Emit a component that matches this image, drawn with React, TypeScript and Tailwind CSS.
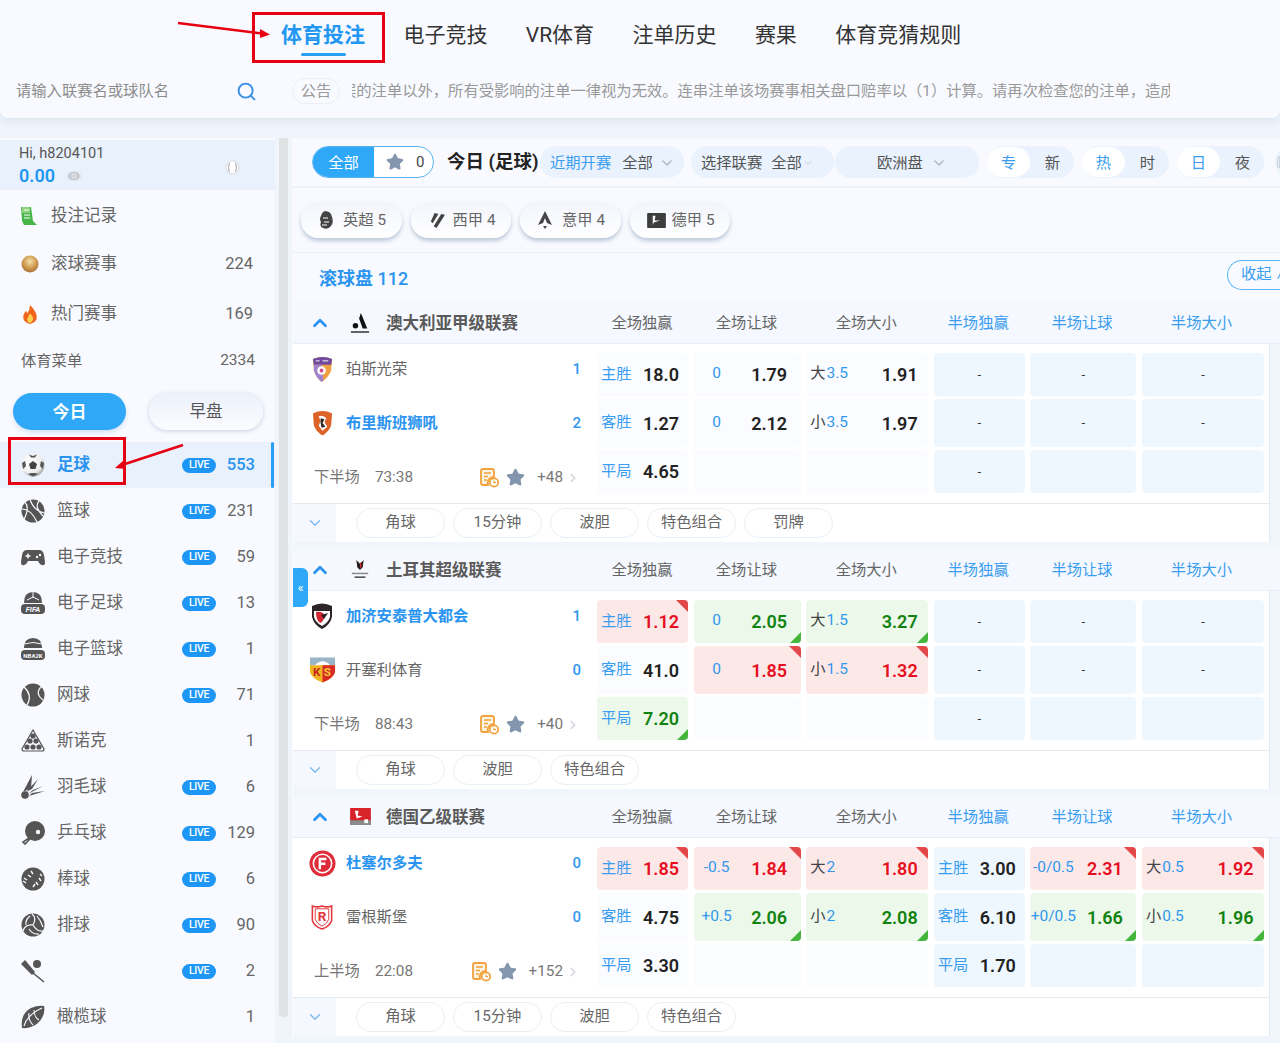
import { ChevronDown, ChevronRight, ChevronUp, Eye, Search, Star } from "lucide-react";
import type { ReactNode } from "react";

type Tone = "red" | "green";

interface Cell {
  label?: string;
  dark?: boolean;
  line?: string;
  value?: string;
  tone?: Tone;
  dash?: boolean;
}

interface Match {
  league: string;
  leagueLogo: ReactNode;
  home: { name: string; score: string; logo: ReactNode; winner?: boolean };
  away: { name: string; score: string; logo: ReactNode; winner?: boolean };
  period: string;
  clock: string;
  more: string;
  cells: Cell[];
  markets: string[];
}

const dash: Cell = { dash: true };
const empty: Cell = {};

function PerthLogo() {
  return (
    <svg viewBox="0 0 24 28" className="h-[27px] w-[23px]">
      <path d="M2 3 Q12 -1 22 3 L21 15 Q18 23 11 27 Q5 22 3 15Z" fill="#f0a040" />
      <path d="M2 3 Q12 -1 22 3 L21 9 L3 9Z" fill="#6f4a9e" />
      <path d="M3 9 L11 9 L13 25 L11 27 Q5 22 3 15Z" fill="#a184cf" />
      <circle cx="11" cy="15" r="4.5" fill="#fff" />
      <circle cx="11" cy="15" r="2" fill="#d24a8a" />
      <path d="M5 5 H9 M12 5 H18" stroke="#fff" strokeWidth="1" />
    </svg>
  );
}

function BrisbaneLogo() {
  return (
    <svg viewBox="0 0 22 28" className="h-[28px] w-[21px]">
      <path d="M1 4 Q11 -1 21 4 L20 17 Q17 24 11 27 Q5 24 2 17Z" fill="#dc6228" />
      <path d="M7 7 Q12 5 15 9 L13 13 L16 18 L11 22 L7 17 L9 12Z" fill="#fff" />
      <path d="M9 9 L13 10 L11 14 L14 18 L10 19 L9 14Z" fill="#2b2320" />
    </svg>
  );
}

function GaziantepLogo() {
  return (
    <svg viewBox="0 0 24 28" className="h-[28px] w-[24px]">
      <path d="M2 4 Q12 -1 22 4 L22 15 Q20 23 12 27 Q4 23 2 15Z" fill="#2c2426" />
      <path d="M4 9 H20 L20 15 Q18 21 12 24 Q6 21 4 15Z" fill="#fff" />
      <path d="M6 10 Q13 9 15 14 Q13 20 10 21 Q6 18 6 10Z" fill="#d22630" />
      <path d="M11 13 L18 11 L14 17Z" fill="#2c2426" />
    </svg>
  );
}

function KayseriLogo() {
  return (
    <svg viewBox="0 0 28 28" className="h-[28px] w-[27px]">
      <path d="M1 1 H27 V9 H1Z" fill="#9ab4c8" />
      <path d="M6 9 Q14 1 22 9Z" fill="#fff" />
      <path d="M1 9 H27 V16 Q25 23 14 27 Q3 23 1 16Z" fill="#f2b322" />
      <path d="M14 9 H27 V16 Q25 23 14 27Z" fill="#d92b25" />
      <text x="8" y="20" textAnchor="middle" fontSize="12" fontWeight="700" fill="#c5281f">
        K
      </text>
      <text x="19" y="20" textAnchor="middle" fontSize="12" fontWeight="700" fill="#f7c93a">
        S
      </text>
    </svg>
  );
}

function FortunaLogo() {
  return (
    <svg viewBox="0 0 28 28" className="h-[27px] w-[27px]">
      <circle cx="14" cy="14" r="13.5" fill="#df2c3a" />
      <circle cx="14" cy="14" r="9.5" fill="none" stroke="#fff" strokeWidth="1.6" />
      <path d="M10 8 H18 V10.5 H12.5 V13 H17 V15.5 H12.5 V20 H10Z" fill="#fff" />
    </svg>
  );
}

function RegensburgLogo() {
  return (
    <svg viewBox="0 0 24 28" className="h-[27px] w-[24px]">
      <path d="M2 2 Q7 4 12 2 Q17 4 22 2 V17 Q20 23 12 26 Q4 23 2 17Z" fill="#fff" stroke="#e2363c" strokeWidth="1.6" />
      <path d="M5 5 H19 V16 Q17 21 12 23 Q7 21 5 16Z" fill="none" stroke="#e2363c" strokeWidth="1" />
      <text x="12" y="18" textAnchor="middle" fontSize="14" fontWeight="700" fill="#e2363c">
        R
      </text>
    </svg>
  );
}

function ALeagueLogo() {
  return (
    <svg viewBox="0 0 22 24" className="h-[24px] w-[20px]">
      <path d="M12 1 L19 18 H14 L10 7Z" fill="#111" />
      <circle cx="6" cy="15" r="3" fill="#111" />
      <rect x="1" y="21" width="20" height="1.8" fill="#444" />
    </svg>
  );
}

function TurkeyLogo() {
  return (
    <svg viewBox="0 0 22 24" className="h-[24px] w-[20px]">
      <path d="M7 1 L11 5 L15 1 L14 9 L11 12 L8 9Z" fill="#2a1c1c" />
      <path d="M11 3 L13 7 L11 11Z" fill="#d22630" />
      <rect x="2" y="15" width="18" height="1.6" fill="#888" />
      <rect x="5" y="19" width="12" height="1.8" fill="#555" />
    </svg>
  );
}

function Liga2Logo() {
  return (
    <svg viewBox="0 0 22 18" className="h-[17px] w-[21px]">
      <rect width="22" height="18" fill="#d8232a" />
      <path d="M0 13 H22 V18 H0Z" fill="#8b8b8b" />
      <path d="M5 3 H9 L8 8 L13 9 L7 11Z" fill="#fff" />
      <rect x="15" y="12" width="4" height="4" fill="#fff" />
    </svg>
  );
}

const matches: Match[] = [
  {
    league: "澳大利亚甲级联赛",
    leagueLogo: <ALeagueLogo />,
    home: { name: "珀斯光荣", score: "1", logo: <PerthLogo /> },
    away: { name: "布里斯班狮吼", score: "2", logo: <BrisbaneLogo />, winner: true },
    period: "下半场",
    clock: "73:38",
    more: "+48",
    cells: [
      { label: "主胜", value: "18.0" },
      { label: "客胜", value: "1.27" },
      { label: "平局", value: "4.65" },
      { line: "0", value: "1.79" },
      { line: "0", value: "2.12" },
      empty,
      { label: "大", dark: true, line: "3.5", value: "1.91" },
      { label: "小", dark: true, line: "3.5", value: "1.97" },
      empty,
      dash,
      dash,
      dash,
      dash,
      dash,
      empty,
      dash,
      dash,
      empty,
    ],
    markets: ["角球", "15分钟", "波胆", "特色组合", "罚牌"],
  },
  {
    league: "土耳其超级联赛",
    leagueLogo: <TurkeyLogo />,
    home: { name: "加济安泰普大都会", score: "1", logo: <GaziantepLogo />, winner: true },
    away: { name: "开塞利体育", score: "0", logo: <KayseriLogo /> },
    period: "下半场",
    clock: "88:43",
    more: "+40",
    cells: [
      { label: "主胜", value: "1.12", tone: "red" },
      { label: "客胜", value: "41.0" },
      { label: "平局", value: "7.20", tone: "green" },
      { line: "0", value: "2.05", tone: "green" },
      { line: "0", value: "1.85", tone: "red" },
      empty,
      { label: "大", dark: true, line: "1.5", value: "3.27", tone: "green" },
      { label: "小", dark: true, line: "1.5", value: "1.32", tone: "red" },
      empty,
      dash,
      dash,
      dash,
      dash,
      dash,
      empty,
      dash,
      dash,
      empty,
    ],
    markets: ["角球", "波胆", "特色组合"],
  },
  {
    league: "德国乙级联赛",
    leagueLogo: <Liga2Logo />,
    home: { name: "杜塞尔多夫", score: "0", logo: <FortunaLogo />, winner: true },
    away: { name: "雷根斯堡", score: "0", logo: <RegensburgLogo /> },
    period: "上半场",
    clock: "22:08",
    more: "+152",
    cells: [
      { label: "主胜", value: "1.85", tone: "red" },
      { label: "客胜", value: "4.75" },
      { label: "平局", value: "3.30" },
      { line: "-0.5", value: "1.84", tone: "red" },
      { line: "+0.5", value: "2.06", tone: "green" },
      empty,
      { label: "大", dark: true, line: "2", value: "1.80", tone: "red" },
      { label: "小", dark: true, line: "2", value: "2.08", tone: "green" },
      empty,
      { label: "主胜", value: "3.00" },
      { label: "客胜", value: "6.10" },
      { label: "平局", value: "1.70" },
      { line: "-0/0.5", value: "2.31", tone: "red" },
      { line: "+0/0.5", value: "1.66", tone: "green" },
      empty,
      { label: "大", dark: true, line: "0.5", value: "1.92", tone: "red" },
      { label: "小", dark: true, line: "0.5", value: "1.96", tone: "green" },
      empty,
    ],
    markets: ["角球", "15分钟", "波胆", "特色组合"],
  },
];

const columnNames = ["全场独赢", "全场让球", "全场大小", "半场独赢", "半场让球", "半场大小"];

function OddsCell({ cell, half, column }: { cell: Cell; half: boolean; column: number }) {
  const bg =
    cell.tone === "red"
      ? "bg-[#fde8e8]"
      : cell.tone === "green"
        ? "bg-[#ecf8ea]"
        : half
          ? "bg-[#eef7fe]"
          : "bg-[#fafcff]";
  const valueColor =
    cell.tone === "red" ? "text-[#e60f1e]" : cell.tone === "green" ? "text-[#12820f]" : "text-[#222]";
  const isHandicap = column === 1 || column === 4;

  return (
    <div className={`relative flex items-center justify-between overflow-hidden rounded-[4px] ${bg}`}>
      {cell.dash && <span className="w-full text-center text-[13px] text-[#333]">-</span>}
      {cell.value && (
        <>
          {isHandicap ? (
            <span className="-mt-[1px] w-[46px] text-center text-[15.5px] text-[#3197ef]">{cell.line}</span>
          ) : (
            <span className="-mt-[1px] pl-[4px] text-[15.3px]">
              <span className={cell.dark ? "text-[#444]" : "text-[#3b9df0]"}>{cell.label}</span>
              {cell.line && <span className="ml-[1px] text-[15.5px] text-[#3197ef]">{cell.line}</span>}
            </span>
          )}
          <span
            className={`text-[18px] font-semibold ${valueColor} ${
              isHandicap ? "pr-[13.5px]" : column === 0 || column === 3 ? "pr-[9px]" : "pr-[10.5px]"
            }`}
          >
            {cell.value}
          </span>
        </>
      )}
      {cell.tone === "red" && (
        <span className="absolute right-0 top-0 h-0 w-0 border-l-[12px] border-t-[12px] border-l-transparent border-t-[#e2474a]" />
      )}
      {cell.tone === "green" && (
        <span className="absolute bottom-0 right-0 h-0 w-0 border-b-[11px] border-l-[11px] border-b-[#46b53e] border-l-transparent" />
      )}
    </div>
  );
}

function ScheduleIcon() {
  return (
    <svg viewBox="0 0 20 20" className="h-[20px] w-[20px]">
      <path d="M2 3 Q2 1 4 1 H13 Q15 1 15 3 V9 A6 6 0 0 0 9 17 H4 Q2 17 2 15Z" fill="#fdf3e3" stroke="#f2a23c" strokeWidth="1.8" />
      <path d="M5 5 H12 M5 8.5 H9 M5 12 H8" stroke="#f2a23c" strokeWidth="1.6" />
      <circle cx="15" cy="14.5" r="4.2" fill="#fff" stroke="#f2a23c" strokeWidth="1.8" />
      <path d="M15 12.5 V14.7 H17" fill="none" stroke="#f2a23c" strokeWidth="1.2" />
    </svg>
  );
}

function TeamRow({ team, className }: { team: Match["home"]; className: string }) {
  return (
    <div className={`flex items-center pr-[16px] ${className}`}>
      <div className="flex w-[53px] justify-center pl-[5px]">{team.logo}</div>
      <span className={`mt-[1px] flex-1 text-[15.3px] ${team.winner ? "font-bold text-[#2a94f0]" : "text-[#666]"}`}>
        {team.name}
      </span>
      <span className="text-[15px] font-medium text-[#3197ef]">{team.score}</span>
    </div>
  );
}

function MatchBlock({ match }: { match: Match }) {
  return (
    <div className="pb-[7px]">
      <div className="flex h-[42px] items-center border-b border-[#e8eef6] bg-[#f5f9ff]">
        <ChevronUp className="ml-[16px] h-[22px] w-[22px] text-[#2a94f0]" strokeWidth={3} />
        <div className="ml-[15px] flex w-[40px] justify-start pl-[4px]">{match.leagueLogo}</div>
        <span className="mt-[3px] w-[210.5px] text-[16.5px] font-bold text-[#5a5a5a]">{match.league}</span>
        <div className="mt-[2px] grid grid-cols-[91px_107px_122px_91px_106px_122px] gap-x-[5.4px]">
          {columnNames.map((name, i) => (
            <span key={name} className={`text-center text-[15.3px] ${i > 2 ? "text-[#3b9df0]" : "text-[#666]"}`}>
              {name}
            </span>
          ))}
        </div>
      </div>
      <div className="flex h-[160px] w-[977px] border-b border-r border-[#e4e9f0] bg-white">
        <div className="w-[304px]">
          <TeamRow team={match.home} className="h-[50px]" />
          <TeamRow team={match.away} className="h-[58px]" />
          <div className="flex h-[50px] items-center pl-[21px] pr-[17px] text-[15.3px] text-[#777]">
            <span className="mr-[15px]">{match.period}</span>
            <span>{match.clock}</span>
            <span className="ml-auto mt-[1px] flex items-center">
              <ScheduleIcon />
              <Star className="ml-[7px] mr-[12px] h-[19px] w-[19px] fill-[#8496ad] text-[#8496ad]" />
              <span>{match.more}</span>
              <ChevronRight className="ml-[3px] h-[16px] w-[14px] text-[#d4d9df]" strokeWidth={3} />
            </span>
          </div>
        </div>
        <div className="mt-[9px] grid h-[140px] grid-flow-col grid-cols-[91px_107px_122px_91px_106px_122px] grid-rows-[43px_48px_43px] gap-x-[5.6px] gap-y-[3px]">
          {match.cells.map((cell, i) => (
            <OddsCell key={i} cell={cell} half={i >= 9} column={Math.floor(i / 3)} />
          ))}
        </div>
      </div>
      <div className="flex h-[38px] w-[977px] items-center border-r border-[#e4e9f0] bg-white">
        <div className="flex h-full w-[43px] items-center justify-center bg-[#f5f9ff]">
          <ChevronDown className="h-[18px] w-[18px] text-[#7ab8f0]" strokeWidth={1.8} />
        </div>
        <div className="-mt-[1px] ml-[20px] flex gap-x-[8px]">
          {match.markets.map((m) => (
            <span
              key={m}
              className="flex h-[30px] w-[89px] items-center justify-center rounded-full border border-[#eaeff5] text-[15.3px] text-[#666]"
            >
              {m}
            </span>
          ))}
        </div>
      </div>
    </div>
  );
}

function Sport({ children }: { children: ReactNode }) {
  return (
    <svg viewBox="0 0 24 24" className="h-[24px] w-[24px]" fill="#555">
      {children}
    </svg>
  );
}

const sports: { name: string; live: boolean; count: string; icon: ReactNode }[] = [
  {
    name: "篮球",
    live: true,
    count: "231",
    icon: (
      <Sport>
        <circle cx="12" cy="12" r="11.5" />
        <path
          d="M9 0.5 Q13 12 23.5 14 M0.5 10 Q10 10 16 23 M4 3.5 Q9 8 3 20.5 M18 2 Q13 8 22 17"
          fill="none"
          stroke="#f8faff"
          strokeWidth="1.2"
        />
      </Sport>
    ),
  },
  {
    name: "电子竞技",
    live: true,
    count: "59",
    icon: (
      <Sport>
        <path d="M6 5 H18 Q22 5 23 10 L24 17 Q24 21 21 20 Q19 20 17 16 H7 Q5 20 3 20 Q0 21 0 17 L1 10 Q2 5 6 5Z" />
        <path d="M4.5 11 H9.5 M7 8.5 V13.5" stroke="#f8faff" strokeWidth="1.5" />
        <circle cx="16" cy="12" r="1.2" fill="#f8faff" />
        <circle cx="19" cy="10" r="1.2" fill="#f8faff" />
      </Sport>
    ),
  },
  {
    name: "电子足球",
    live: true,
    count: "13",
    icon: (
      <Sport>
        <path d="M3 12 Q3 1 12 1 Q21 1 21 12Z" />
        <path d="M12 1 V7 M6 9 L12 6 L18 9" fill="none" stroke="#f8faff" strokeWidth="1" />
        <rect x="0" y="13" width="24" height="10" rx="4" />
        <text x="12" y="21" textAnchor="middle" fontSize="7.5" fontWeight="700" fontStyle="italic" fill="#f8faff">
          FIFA
        </text>
      </Sport>
    ),
  },
  {
    name: "电子篮球",
    live: true,
    count: "1",
    icon: (
      <Sport>
        <path d="M3 11 Q3 1 12 1 Q21 1 21 11Z" />
        <path d="M3 7 Q12 4 21 7" fill="none" stroke="#f8faff" strokeWidth="1" />
        <rect x="0" y="13" width="24" height="10" rx="4" />
        <text x="12" y="20.5" textAnchor="middle" fontSize="6" fontWeight="700" fill="#f8faff">
          NBA2K
        </text>
      </Sport>
    ),
  },
  {
    name: "网球",
    live: true,
    count: "71",
    icon: (
      <Sport>
        <circle cx="12" cy="12" r="11.5" />
        <path d="M3 4 Q12 12 6 22 M21 3 Q13 10 22 17" fill="none" stroke="#f8faff" strokeWidth="1.2" />
      </Sport>
    ),
  },
  {
    name: "斯诺克",
    live: false,
    count: "1",
    icon: (
      <Sport>
        <path d="M12 1 L23 20 Q23 22 21 22 H3 Q1 22 1 20Z" fill="none" stroke="#555" strokeWidth="1.2" />
        <circle cx="12" cy="7" r="2.6" />
        <circle cx="9" cy="12" r="2.6" />
        <circle cx="15" cy="12" r="2.6" />
        <circle cx="6" cy="18" r="2.6" />
        <circle cx="12" cy="18" r="2.6" />
        <circle cx="18" cy="18" r="2.6" />
      </Sport>
    ),
  },
  {
    name: "羽毛球",
    live: true,
    count: "6",
    icon: (
      <Sport>
        <circle cx="4" cy="20" r="3.8" />
        <path d="M2 17 L11 0 L10 13Z M5 17 L17 4 L11 14Z M7 19 L22 11 L12 15Z M8 21 L24 16 L11 18Z" />
      </Sport>
    ),
  },
  {
    name: "乒乓球",
    live: true,
    count: "129",
    icon: (
      <Sport>
        <circle cx="14" cy="10" r="10" />
        <circle cx="17" cy="11" r="2.2" fill="#f8faff" />
        <path d="M8 17 L2 21 L4 23 L9 18" fill="none" stroke="#555" strokeWidth="1.6" />
      </Sport>
    ),
  },
  {
    name: "棒球",
    live: true,
    count: "6",
    icon: (
      <Sport>
        <circle cx="12" cy="12" r="11.5" />
        <path
          d="M3 11 L6 13 M7 8 L10 10 M10 4 L12 7 M12 20 L14 17 M15 15 L17 18 M18 11 L20 14 M2 14 L5 16 M19 7 L21 9"
          fill="none"
          stroke="#f8faff"
          strokeWidth="1.4"
        />
      </Sport>
    ),
  },
  {
    name: "排球",
    live: true,
    count: "90",
    icon: (
      <Sport>
        <circle cx="12" cy="12" r="11.5" />
        <path
          d="M12 12 Q16 5 11 1 M12 12 Q4 11 2 18 M12 12 Q16 19 22 18 M9 3 Q4 7 5 12 M16 3 Q20 8 22 14 M8 16 Q12 22 18 21"
          fill="none"
          stroke="#f8faff"
          strokeWidth="1.2"
        />
      </Sport>
    ),
  },
  {
    name: "",
    live: true,
    count: "2",
    icon: (
      <Sport>
        <circle cx="16" cy="5" r="4" />
        <path d="M0 5 L4 1 L14 13 L11 16Z" />
        <path d="M12 14 L23 23" stroke="#555" strokeWidth="1.6" />
      </Sport>
    ),
  },
  {
    name: "橄榄球",
    live: false,
    count: "1",
    icon: (
      <Sport>
        <path d="M1 23 Q-1 9 10 3 Q17 0 23 1 Q25 10 17 18 Q10 24 1 23Z" />
        <path d="M3 21 Q6 10 21 3 M8 8 Q7 15 12 20 M13 5 Q13 12 18 15" fill="none" stroke="#f8faff" strokeWidth="1.1" />
      </Sport>
    ),
  },
];

function LiveBadge() {
  return (
    <span className="flex h-[15px] w-[34px] items-center justify-center rounded-full bg-[#1e96f5] text-[10.5px] font-medium tracking-[-0.3px] text-white">
      LIVE
    </span>
  );
}

function SportRow({ icon, name, live, count, active }: { icon: ReactNode; name: string; live: boolean; count: string; active?: boolean }) {
  return (
    <div className={`relative flex h-[46px] items-center pl-[21px] pr-[20px] ${active ? "bg-[#e9f1fc]" : ""}`}>
      <div className="w-[36px]">{icon}</div>
      <span className={`flex-1 text-[16.5px] ${active ? "font-bold text-[#2a94f0]" : "text-[#666]"}`}>{name}</span>
      {live && <LiveBadge />}
      <span className={`w-[39px] text-right text-[16.5px] ${active ? "font-medium text-[#2a94f0]" : "text-[#666]"}`}>{count}</span>
      {active && <span className="absolute right-[1px] top-0 h-full w-[3px] rounded-full bg-[#2a9df4]" />}
    </div>
  );
}

function TogglePill({ on, off }: { on: string; off: string }) {
  return (
    <div className="flex h-[32px] w-[87px] items-center rounded-full bg-[#eaf2fd] pr-[13px]">
      <span className="flex h-[30px] w-[43px] items-center justify-center rounded-full bg-white pt-[2px] text-[15.3px] text-[#3b9df0]">{on}</span>
      <span className="ml-auto mt-[2px] pr-[1px] text-[15.3px] text-[#555]">{off}</span>
    </div>
  );
}

const leagueChips: { name: string; icon: ReactNode }[] = [
  {
    name: "英超 5",
    icon: (
      <svg viewBox="0 0 16 20" className="h-[20px] w-[16px]" fill="#444">
        <path d="M7 1 Q13 1 14 7 Q16 12 13 16 Q10 20 5 18 Q1 16 3 12 Q1 9 3 6 Q4 2 7 1Z" />
        <path d="M5 8 H10 M6 12 H11 M4 15 H9" stroke="#fff" strokeWidth="1" />
      </svg>
    ),
  },
  {
    name: "西甲 4",
    icon: (
      <svg viewBox="0 0 18 18" className="h-[17px] w-[17px]" fill="#444">
        <path d="M7 1 L11 2 L5 12 L3 10Z M14 2 L18 3 L9 17 L6 15Z" />
      </svg>
    ),
  },
  {
    name: "意甲 4",
    icon: (
      <svg viewBox="0 0 16 20" className="h-[20px] w-[16px]" fill="#444">
        <path d="M8 1 L15 15 L10 13 L8 8 L6 13 L1 15Z" />
        <path d="M6 16 H10 L8 19Z" />
      </svg>
    ),
  },
  {
    name: "德甲 5",
    icon: (
      <svg viewBox="0 0 20 16" className="h-[15px] w-[19px]">
        <rect width="20" height="16" rx="1" fill="#3d3d3d" />
        <path d="M6 3 H9 L8 8 L14 8 L7 10 L6 13Z" fill="#fff" />
      </svg>
    ),
  },
];

export default function App() {
  return (
    <div className="relative h-[1043px] w-[1280px] overflow-hidden bg-[#f0f5fc] font-[Roboto,'Noto_Sans_CJK_SC',sans-serif]">
      {/* top bar */}
      <header className="h-[118px] rounded-b-[8px] bg-[#f8faff] shadow-[0_3px_10px_rgba(170,185,205,0.3)]">
        <nav className="flex h-[70px] items-center gap-x-[38.4px] pl-[281px] pt-[2px] text-[21px] text-[#333]">
          <span className="relative font-bold text-[#2196f3]">
            体育投注
            <span className="absolute -bottom-[4px] left-[20px] h-[3px] w-[45px] rounded-full bg-[#2aa0f5]" />
          </span>
          <span>电子竞技</span>
          <span>VR体育</span>
          <span>注单历史</span>
          <span>赛果</span>
          <span>体育竞猜规则</span>
        </nav>
        <div className="flex h-[40px] items-center pt-[2px]">
          <span className="w-[236px] pl-[16px] text-[15.3px] text-[#8c8c8c]">请输入联赛名或球队名</span>
          <Search className="h-[21px] w-[21px] text-[#3a8ee6]" strokeWidth={2.2} />
          <span className="ml-[35px] flex h-[26px] w-[48px] items-center justify-center rounded-full border border-[#eceff4] text-[15.3px] text-[#999]">
            公告
          </span>
          <div className="ml-[12px] w-[818px] overflow-hidden whitespace-nowrap text-[15.3px] text-[#999]">
            <span className="-ml-[11px] inline-block">误的注单以外，所有受影响的注单一律视为无效。连串注单该场赛事相关盘口赔率以（1）计算。请再次检查您的注单，造成</span>
          </div>
        </div>
      </header>

      <div className="flex pt-[20px]">
        {/* sidebar */}
        <aside className="h-[905px] w-[275px] shrink-0 bg-[#f8faff] pt-[2px]">
          <div className="flex h-[50px] items-center justify-between bg-[#e9f1fc] pl-[19px] pr-[35px] pt-[2px]">
            <div>
              <div className="text-[14.5px] leading-[20px] text-[#555]">Hi, h8204101</div>
              <div className="flex items-center text-[18px] font-semibold leading-[24px] text-[#2196f3]">
                0.00
                <Eye className="ml-[11px] h-[16px] w-[16px] fill-[#c4c9d0] text-[#dfe3e8]" />
              </div>
            </div>
            <svg viewBox="0 0 16 16" className="mt-[2px] h-[15px] w-[15px]" fill="none" stroke="#aaa" strokeWidth="1.2">
              <circle cx="8" cy="8" r="7" fill="#fff" stroke="#d8dce2" />
              <path d="M5 3.5 Q2.5 8 5 12.5 M11 3.5 Q13.5 8 11 12.5" />
            </svg>
          </div>

          <div className="flex h-[52px] items-center pl-[20px]">
            <svg viewBox="0 0 18 20" className="h-[20px] w-[18px]">
              <path d="M1 1 H11 L13 15 L17 19 H4 L2 15Z" fill="#48b548" />
              <path d="M2 1 H10 V7 H2Z" fill="#8bd27a" />
              <path d="M4 4 H9 M4 9 H10 M4 12 H10" stroke="#fff" strokeWidth="1.2" />
            </svg>
            <span className="ml-[13px] mt-[1px] text-[16.5px] text-[#666]">投注记录</span>
          </div>
          <div className="flex h-[44px] items-center pl-[21px] pr-[22px]">
            <svg viewBox="0 0 18 18" className="h-[18px] w-[18px]">
              <defs>
                <radialGradient id="liveBall" cx="50%" cy="35%" r="65%">
                  <stop offset="0%" stopColor="#f5dfa8" />
                  <stop offset="60%" stopColor="#cf9a4f" />
                  <stop offset="100%" stopColor="#a96f34" />
                </radialGradient>
              </defs>
              <circle cx="9" cy="9" r="8.5" fill="url(#liveBall)" />
            </svg>
            <span className="ml-[12px] mt-[1px] flex-1 text-[16.5px] text-[#666]">滚球赛事</span>
            <span className="mt-[1px] text-[16.5px] text-[#666]">224</span>
          </div>
          <div className="flex h-[56px] items-center pl-[21px] pr-[22px]">
            <svg viewBox="0 0 18 20" className="h-[19px] w-[18px]">
              <path d="M9 0 Q15 6 16 11 Q17 18 9 20 Q1 18 2 11 Q3 8 5 6 L6 9 Q9 5 9 0Z" fill="#f0641e" />
              <path d="M9 9 Q13 13 12 16 Q10 19 9 19 Q6 18 6 15 Q7 12 9 9Z" fill="#fbd24e" />
            </svg>
            <span className="ml-[12px] mt-[1px] flex-1 text-[16.5px] text-[#666]">热门赛事</span>
            <span className="mt-[1px] text-[16.5px] text-[#666]">169</span>
          </div>
          <div className="flex h-[36px] items-center justify-between pl-[21px] pr-[20px] pt-[2px] text-[15.3px] text-[#666]">
            <span>体育菜单</span>
            <span className="text-[15.5px]">2334</span>
          </div>
          <div className="mt-[15px] flex h-[37px] pl-[13px]">
            <span className="flex w-[113px] items-center justify-center rounded-full bg-[#2fa9f7] pt-[2px] text-[17px] font-bold text-white shadow-[0_2px_4px_rgba(150,180,220,0.4)]">
              今日
            </span>
            <span className="ml-[23px] flex w-[114px] items-center justify-center rounded-full bg-gradient-to-b from-[#ecf1fb] to-[#fbfcff] pt-[2px] text-[16.5px] text-[#555] shadow-[0_1px_4px_rgba(150,165,200,0.5)]">
              早盘
            </span>
          </div>
          <div className="mt-[12px]">
            <SportRow
              active
              name="足球"
              live
              count="553"
              icon={
                <svg viewBox="0 0 24 24" className="h-[24px] w-[24px]">
                  <defs>
                    <radialGradient id="soccer" cx="40%" cy="35%" r="70%">
                      <stop offset="0%" stopColor="#fff" />
                      <stop offset="70%" stopColor="#eee" />
                      <stop offset="100%" stopColor="#999" />
                    </radialGradient>
                  </defs>
                  <circle cx="12" cy="12" r="11.5" fill="url(#soccer)" />
                  <path d="M12 8 L16 11 L14.5 16 H9.5 L8 11Z" fill="#444" />
                  <path d="M8 1.5 L12 3 L16 1.5 L14 4.5 H10Z M1 10 L4 8 L5 13 L2 16Z M23 10 L20 8 L19 13 L22 16Z M7 21 L10 20 H14 L17 21 L12 23.5Z" fill="#555" />
                </svg>
              }
            />
            {sports.map((s, i) => (
              <SportRow key={i} {...s} />
            ))}
          </div>
        </aside>

        {/* scroll track */}
        <div className="ml-[4px] h-[879px] w-[9px] shrink-0 rounded-b-[4px] bg-[#e0e2e4]" />

        {/* main */}
        <main className="ml-[4px] h-[905px] min-w-0 flex-1 bg-[#f8faff]">
          <div className="flex h-[50px] items-center overflow-hidden border-b-2 border-[#eff2f7] pl-[20px]">
            <div className="flex h-[32px] w-[122px] shrink-0 overflow-hidden rounded-full border border-[#58b5f5] bg-white">
              <span className="flex w-[61px] items-center justify-center bg-[#2fa9f7] pt-[2px] text-[15.3px] text-white">全部</span>
              <span className="flex flex-1 items-center pl-[12px] text-[15px] text-[#444]">
                <Star className="h-[18px] w-[18px] fill-[#8496ad] text-[#8496ad]" />
                <span className="ml-[12px]">0</span>
              </span>
            </div>
            <span className="ml-[13px] mt-[2px] w-[93px] shrink-0 whitespace-nowrap text-[18.5px] font-bold text-[#222]">今日 (足球)</span>
            <div className="flex h-[32px] w-[144px] shrink-0 items-center rounded-full bg-[#eaf2fd] pl-[10px] pt-[2px] text-[15.3px] text-[#555]">
              <span className="text-[#3b9df0]">近期开赛</span>
              <span className="ml-[11px]">全部</span>
              <ChevronDown className="ml-[6px] h-[16px] w-[16px] text-[#a9b4c0]" />
            </div>
            <div className="ml-[7px] flex h-[32px] w-[143px] shrink-0 items-center rounded-full bg-[#eaf2fd] pl-[10px] pt-[2px] text-[15.3px] text-[#555]">
              <span>选择联赛</span>
              <span className="ml-[9px]">全部</span>
              <ChevronDown className="h-[12px] w-[12px] text-[#c4ccd6]" />
            </div>
            <div className="ml-[1px] flex h-[32px] w-[144px] shrink-0 items-center rounded-full bg-[#eaf2fd] pl-[42px] pt-[2px] text-[15.3px] text-[#555]">
              <span>欧洲盘</span>
              <ChevronDown className="ml-[8px] h-[16px] w-[16px] text-[#a9b4c0]" />
            </div>
            <div className="ml-[8px] shrink-0"><TogglePill on="专" off="新" /></div>
            <div className="ml-[8px] shrink-0"><TogglePill on="热" off="时" /></div>
            <div className="ml-[8px] shrink-0"><TogglePill on="日" off="夜" /></div>
            <div className="ml-[11px] flex h-[32px] w-[30px] shrink-0 items-center rounded-l-full bg-[#eaf2fd] pl-[2px]">
              <span className="h-[12px] w-[3px] rounded-l-full border border-[#ccd2da]" />
            </div>
          </div>

          <div className="flex h-[65px] gap-x-[9px] border-b border-[#ebeef4] pl-[9px] pt-[14px]">
            {leagueChips.map((c) => (
              <div
                key={c.name}
                className="flex h-[36px] w-[100.5px] items-center rounded-full bg-gradient-to-b from-[#f2f5fc] to-white pl-[17px] text-[15.3px] text-[#666] shadow-[0_3px_4px_rgba(120,140,170,0.45)]"
              >
                <div className="flex w-[25px] justify-start">{c.icon}</div>
                <span className="mt-[1px]">{c.name}</span>
              </div>
            ))}
          </div>

          <div className="flex h-[44px] items-center justify-between pl-[27px]">
            <span className="mt-[6px] text-[18px] font-bold text-[#2a94f0]">
              滚球盘 <span className="font-medium">112</span>
            </span>
            <span className="-mt-[1px] flex h-[30px] w-[53px] items-center overflow-hidden whitespace-nowrap rounded-l-full border border-r-0 border-[#58b5f5] pl-[13px] text-[15.3px] text-[#3b9df0]">
              收起 ∧
            </span>
          </div>
          <div className="ml-[1px] mt-[5px] bg-[#f1f6fd]">
            {matches.map((m) => (
              <MatchBlock key={m.league} match={m} />
            ))}
          </div>
        </main>
      </div>

      {/* collapse tab */}
      <span className="absolute left-[293px] top-[568px] flex h-[39px] w-[15px] items-center justify-center rounded-r-[6px] bg-[#2fa9f7] text-[13px] text-white">
        «
      </span>

      {/* red annotations drawn on the screenshot */}
      <span className="absolute left-[252px] top-[12px] h-[51px] w-[133px] border-[3px] border-[#e60012]" />
      <span className="absolute left-[8px] top-[437px] h-[48px] w-[118px] border-[3px] border-[#e60012]" />
      <svg className="pointer-events-none absolute left-0 top-0 h-[1043px] w-[1280px]" viewBox="0 0 1280 1043">
        <path d="M178 23 L262 33.5" stroke="#e60012" strokeWidth="2.5" />
        <path d="M270 34.5 L260 29 L260 38Z" fill="#e60012" />
        <path d="M183 445 L122 465" stroke="#e60012" strokeWidth="2.5" />
        <path d="M115 468 L124 460 L126 469Z" fill="#e60012" />
      </svg>
    </div>
  );
}
